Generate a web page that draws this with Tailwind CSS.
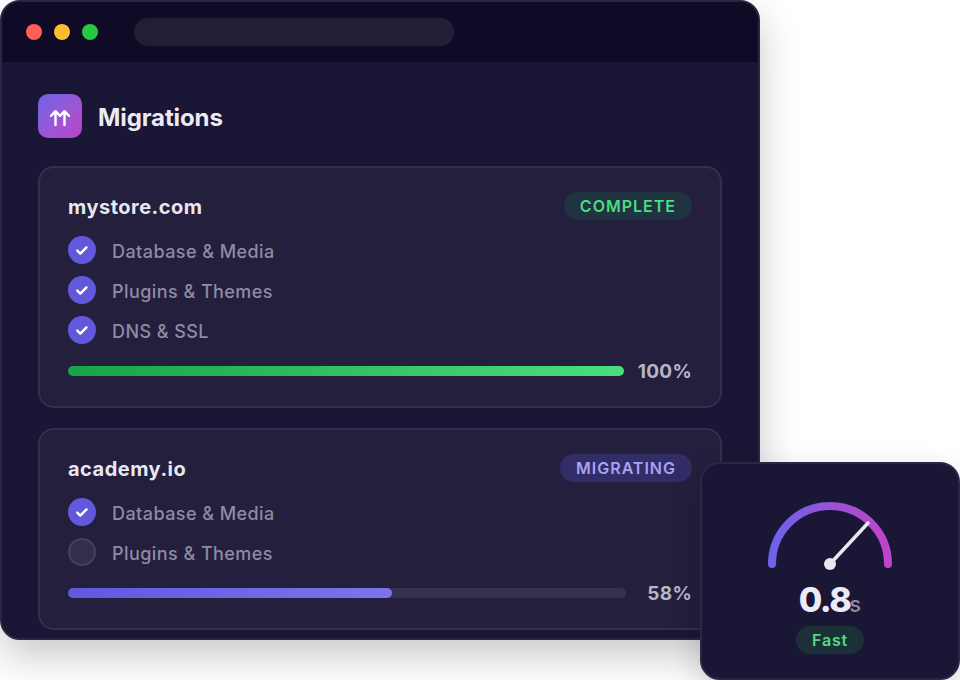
<!DOCTYPE html>
<html lang="en">
<head>
  <meta charset="UTF-8" />
  <meta name="viewport" content="width=device-width, initial-scale=1.0" />
  <title>Migrations</title>
  <script src="https://cdn.jsdelivr.net/npm/@tailwindcss/browser@4"></script>
</head>
<body class="bg-white font-['Inter',sans-serif] relative w-[960px] h-[680px] overflow-hidden">

  <!-- Browser window -->
  <div class="w-[760px] h-[640px] rounded-[20px] border-2 border-[#2a2745] bg-[#1a1635] overflow-hidden shadow-[0_16px_40px_rgba(0,0,0,0.22)] box-border">
    <div class="h-[60px] bg-[#0f0b26] flex items-center pl-6">
      <span class="w-4 h-4 rounded-full bg-[#ff5f57]"></span>
      <span class="w-4 h-4 rounded-full bg-[#febc2e] ml-3"></span>
      <span class="w-4 h-4 rounded-full bg-[#28c840] ml-3"></span>
      <div class="w-80 h-7 rounded-[14px] bg-[#211f35] ml-9"></div>
    </div>

    <div class="px-9 pt-8">
      <div class="flex items-center gap-4">
        <div class="w-11 h-11 rounded-[10px] bg-gradient-to-br from-[#6c63e8] to-[#bb42c6] flex items-center justify-center">
          <svg width="22" height="22" viewBox="0 0 22 22" fill="none" stroke="#fff" stroke-width="2.4" stroke-linecap="round" stroke-linejoin="round">
            <path d="M6.5 20V6.5M2 10.8l4.5-4.6 4.5 4.6" />
            <path d="M15.5 20V6.5M11 10.8l4.5-4.6 4.5 4.6" />
          </svg>
        </div>
        <h1 class="text-2xl font-bold tracking-[-0.1px] text-[#eceaf4] pt-1">Migrations</h1>
      </div>

      <!-- mystore.com -->
      <div class="mt-7 h-[242px] rounded-2xl border-2 border-[#33304d] bg-[#231f3d] px-7 pt-6">
        <div class="flex items-center justify-between">
          <h2 class="h-7 text-xl leading-[30px] font-bold tracking-[0.5px] text-[#e8e6f0]">mystore.com</h2>
          <span class="h-7 px-4 rounded-full bg-[#1f3440] text-[#4ade80] text-base font-semibold tracking-[1px] flex items-center">COMPLETE</span>
        </div>
        <div class="mt-4 flex flex-col gap-3">
          <div class="flex items-center gap-4">
            <span class="w-7 h-7 rounded-full bg-[#6158dc] flex items-center justify-center">
              <svg width="14" height="14" viewBox="0 0 14 14" fill="none" stroke="#fff" stroke-width="2.4" stroke-linecap="round" stroke-linejoin="round"><path d="M2.3 7.6l3 3 6.2-6.2" /></svg>
            </span>
            <span class="h-7 text-lg leading-8 font-medium tracking-[0.44px] text-[#8f8ba3]">Database &amp; Media</span>
          </div>
          <div class="flex items-center gap-4">
            <span class="w-7 h-7 rounded-full bg-[#6158dc] flex items-center justify-center">
              <svg width="14" height="14" viewBox="0 0 14 14" fill="none" stroke="#fff" stroke-width="2.4" stroke-linecap="round" stroke-linejoin="round"><path d="M2.3 7.6l3 3 6.2-6.2" /></svg>
            </span>
            <span class="h-7 text-lg leading-8 font-medium tracking-[0.44px] text-[#8f8ba3]">Plugins &amp; Themes</span>
          </div>
          <div class="flex items-center gap-4">
            <span class="w-7 h-7 rounded-full bg-[#6158dc] flex items-center justify-center">
              <svg width="14" height="14" viewBox="0 0 14 14" fill="none" stroke="#fff" stroke-width="2.4" stroke-linecap="round" stroke-linejoin="round"><path d="M2.3 7.6l3 3 6.2-6.2" /></svg>
            </span>
            <span class="h-7 text-lg leading-8 font-medium tracking-[0.44px] text-[#8f8ba3]">DNS &amp; SSL</span>
          </div>
        </div>
        <div class="mt-[13px] flex items-center justify-between">
          <div class="w-[556px] h-2.5 rounded-full bg-gradient-to-r from-[#16a34a] to-[#4ade80]"></div>
          <span class="h-7 text-[19px] leading-[30px] font-bold tracking-[0.3px] text-[#b8b5c7]">100%</span>
        </div>
      </div>

      <!-- academy.io -->
      <div class="mt-5 h-[202px] rounded-2xl border-2 border-[#33304d] bg-[#231f3d] px-7 pt-6">
        <div class="flex items-center justify-between">
          <h2 class="h-7 text-xl leading-[30px] font-bold tracking-[0.5px] text-[#e8e6f0]">academy.io</h2>
          <span class="h-7 px-4 rounded-full bg-[#322d66] text-[#a8a2f5] text-base font-semibold tracking-[1px] flex items-center">MIGRATING</span>
        </div>
        <div class="mt-4 flex flex-col gap-3">
          <div class="flex items-center gap-4">
            <span class="w-7 h-7 rounded-full bg-[#6158dc] flex items-center justify-center">
              <svg width="14" height="14" viewBox="0 0 14 14" fill="none" stroke="#fff" stroke-width="2.4" stroke-linecap="round" stroke-linejoin="round"><path d="M2.3 7.6l3 3 6.2-6.2" /></svg>
            </span>
            <span class="h-7 text-lg leading-8 font-medium tracking-[0.44px] text-[#8f8ba3]">Database &amp; Media</span>
          </div>
          <div class="flex items-center gap-4">
            <span class="w-7 h-7 rounded-full bg-[#322e4c] border-2 border-[#45425e]"></span>
            <span class="h-7 text-lg leading-8 font-medium tracking-[0.44px] text-[#8f8ba3]">Plugins &amp; Themes</span>
          </div>
        </div>
        <div class="mt-[13px] flex items-center justify-between">
          <div class="w-[558px] h-2.5 rounded-full bg-[#35314f]">
            <div class="w-[324px] h-full rounded-full bg-gradient-to-r from-[#6158dc] to-[#7c73ee]"></div>
          </div>
          <span class="h-7 text-[19px] leading-[30px] font-bold tracking-[0.3px] text-[#b8b5c7]">58%</span>
        </div>
      </div>
    </div>
  </div>

  <!-- Speed widget, overlaps the window -->
  <div class="absolute left-[700px] top-[462px] w-[260px] h-[218px] rounded-[20px] border-2 border-[#2a2745] bg-[#1a1635] shadow-[0_12px_32px_rgba(0,0,0,0.18)] flex flex-col items-center">
    <svg class="mt-[32px] ml-1" width="136" height="76" viewBox="0 0 136 76" fill="none">
      <defs>
        <linearGradient id="gauge" x1="0" y1="0" x2="1" y2="0">
          <stop offset="0" stop-color="#6c63e8" />
          <stop offset="1" stop-color="#c044c8" />
        </linearGradient>
      </defs>
      <path d="M8 68A58 58 0 0 1 124 68" stroke="url(#gauge)" stroke-width="8" stroke-linecap="round" />
      <path d="M66 68L104 27" stroke="#e8e6f0" stroke-width="3.5" stroke-linecap="round" />
      <circle cx="66" cy="68" r="6" fill="#e8e6f0" />
    </svg>
    <div class="mt-2 flex items-baseline">
      <span class="text-[34px] leading-10 font-extrabold tracking-[-1.5px] text-[#eceaf4]">0.8</span>
      <span class="-ml-px text-[22px] leading-6 font-medium text-[#8f8ba3]">s</span>
    </div>
    <span class="mt-1.5 h-7 px-4 rounded-full bg-[#1c3038] text-[#4ade80] text-base font-semibold tracking-[0.8px] flex items-center">Fast</span>
  </div>

</body>
</html>
